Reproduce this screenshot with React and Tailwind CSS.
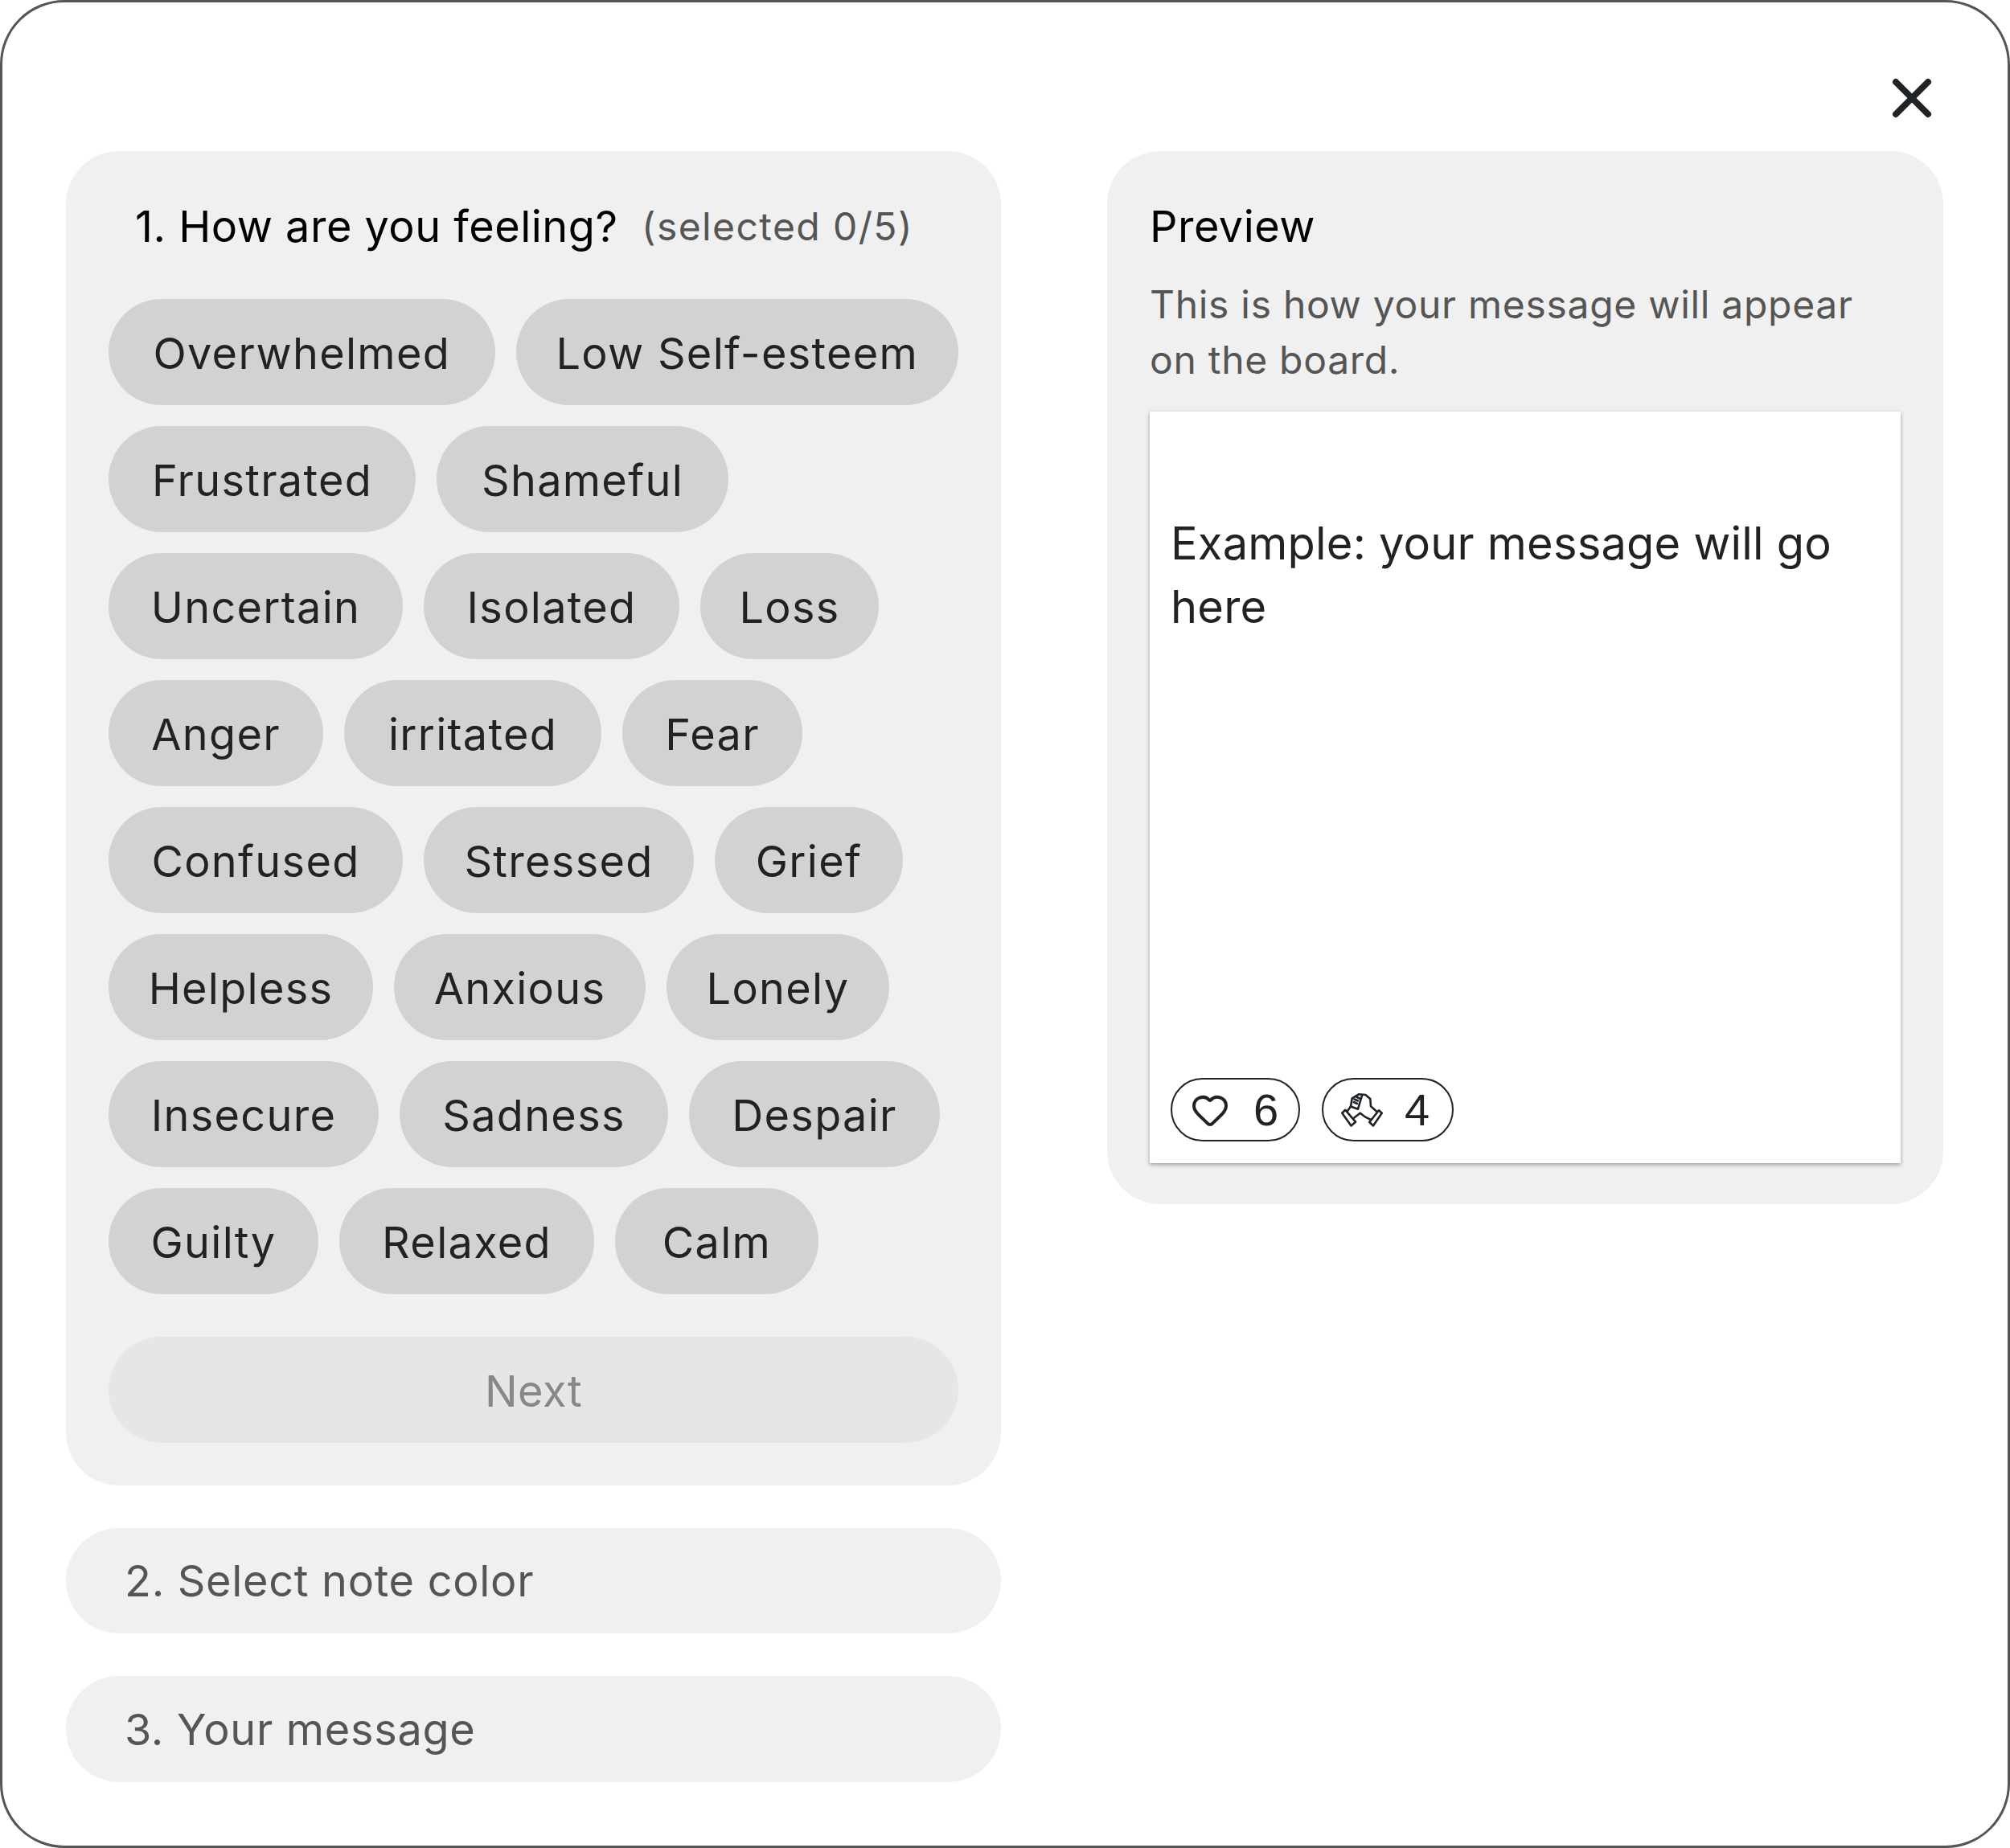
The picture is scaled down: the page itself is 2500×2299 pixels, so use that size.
import React from "react";
import { Heart, X } from "lucide-react";

const rows = [
  [["Overwhelmed", "w-[481px]"], ["Low Self-esteem", "w-[551px]"]],
  [["Frustrated", "w-[382px]"], ["Shameful", "w-[363px]"]],
  [["Uncertain", "w-[366px]"], ["Isolated", "w-[318px]"], ["Loss", "w-[222px]"]],
  [["Anger", "w-[267px]"], ["irritated", "w-[320px]"], ["Fear", "w-[224px]"]],
  [["Confused", "w-[366px]"], ["Stressed", "w-[336px]"], ["Grief", "w-[234px]"]],
  [["Helpless", "w-[329px]"], ["Anxious", "w-[313px]"], ["Lonely", "w-[277px]"]],
  [["Insecure", "w-[336px]"], ["Sadness", "w-[334px]"], ["Despair", "w-[312px]"]],
  [["Guilty", "w-[261px]"], ["Relaxed", "w-[317px]"], ["Calm", "w-[253px]"]],
];

function HighFive() {
  return (
    <svg viewBox="0 0 52 42" className="w-[52px] h-[42px] shrink-0" fill="none" stroke="#1f2326" strokeWidth="2.6" strokeLinejoin="round" strokeLinecap="round">
      <path d="M1.3 24.7 L5.3 20.8 L18 35.7 L12.5 40.5 Z" />
      <path d="M50.7 24.7 L47 21.3 L35.3 36 L40 40.5 Z" />
      <path d="M8 22 L12 16.5 L13.7 6.3 L22 1.3 L30.3 2 L36.3 7 L37 16.3 L43.7 22.3" />
      <path d="M15.3 31.3 L23.7 24.7 L30.3 29.7 L37 33" />
      <path d="M12 16.5 L21 19.7 L26 3" />
      <path d="M16.5 7.5 L21 9.5 M15.8 11 L20 13 M19 4.5 L23 6.5" />
    </svg>
  );
}

export default function App() {
  return (
    <div className="w-[2500px] h-[2299px] border-[3px] border-[#555555] rounded-[80px] bg-white pl-[79px] pr-[80px] text-[#1f2326] font-['Inter',sans-serif]">
      <div className="flex justify-end h-[185px] pt-[79px] -mr-[1px]">
        <X size={80} strokeWidth={2.4} className="text-[#1f2326]" />
      </div>

      <div className="flex gap-[132px] items-start">
        {/* Left column */}
        <div className="w-[1163px] flex flex-col gap-[53px]">
          <div className="h-[1660px] bg-[#f0f0f0] rounded-[66px] px-[53px] pt-[53px]">
            <div className="flex items-center h-[80px] pl-[33px] text-black">
              <span className="text-[54px] tracking-[0.5px] w-[630px]">1. How are you feeling?</span>
              <span className="text-[48px] tracking-[1.4px] pt-[2px] text-[#555555]">(selected 0/5)</span>
            </div>
            <div className="mt-[51px] flex flex-col gap-[26px]">
              {rows.map((row, i) => (
                <div key={i} className="flex gap-[26px]">
                  {row.map(([label, width]) => (
                    <button key={label} className={`${width} h-[132px] pt-[2px] rounded-full bg-[#d3d2d3] text-[54px] tracking-[1.3px] text-center`}>
                      {label}
                    </button>
                  ))}
                </div>
              ))}
            </div>
            <button className="mt-[53px] w-full h-[132px] pt-[2px] rounded-full bg-[#e6e6e6] text-[54px] tracking-[0.5px] text-[#888888]">Next</button>
          </div>
          <div className="h-[131px] bg-[#f0f0f0] rounded-full flex items-center pl-[73px] text-[54px] tracking-[0.7px] text-[#555555]">2. Select note color</div>
          <div className="h-[132px] bg-[#f0f0f0] rounded-full flex items-center pl-[73px] text-[54px] tracking-[0.7px] text-[#555555]">3. Your message</div>
        </div>

        {/* Preview */}
        <div className="w-[1040px] h-[1310px] bg-[#f0f0f0] rounded-[66px] px-[53px] pt-[53px]">
          <div className="h-[80px] flex items-center text-[54px] tracking-[0.5px] text-black">Preview</div>
          <p className="mt-[23px] text-[48px] tracking-[0.7px] leading-[69px] text-[#555555]">This is how your message will appear on the board.</p>
          <div className="mt-[30px] h-[935px] bg-white shadow-[0_2px_5px_rgba(0,0,0,0.35)] px-[26px] pt-[125px] pb-[27px] flex flex-col justify-between">
            <p className="text-[56px] tracking-[0.2px] leading-[79px]">Example: your message will go here</p>
            <div className="flex gap-[27px] font-['Liberation_Sans',sans-serif] text-[56px]">
              <div className="w-[161px] h-[79px] rounded-full border-2 border-[#1f2326] flex items-center pl-[23px] gap-[30px]">
                <Heart size={48} strokeWidth={2} className="shrink-0" />
                <span>6</span>
              </div>
              <div className="w-[164px] h-[79px] rounded-full border-2 border-[#1f2326] flex items-center pl-[22px] gap-[27px]">
                <HighFive />
                <span>4</span>
              </div>
            </div>
          </div>
        </div>
      </div>
    </div>
  );
}
